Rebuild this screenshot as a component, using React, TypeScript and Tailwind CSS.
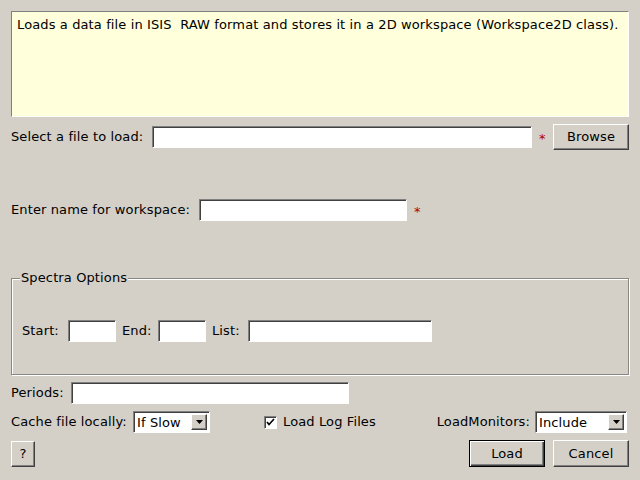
const font = { fontFamily: '"DejaVu Sans", Verdana, sans-serif' };

const sunken =
  "bg-white border border-t-[#808080] border-l-[#808080] border-r-white border-b-white shadow-[inset_1px_1px_0_#404040]";
const raised =
  "bg-[#d4d0c8] border border-t-white border-l-white border-r-[#404040] border-b-[#404040] shadow-[inset_-1px_-1px_0_#808080]";

function TextBox({ className = "" }: { className?: string }) {
  return <div className={`${sunken} h-[22px] ${className}`} />;
}

function Star() {
  return <span className="text-[#b00000] text-[13px] leading-none">*</span>;
}

function Combo({ value, className = "" }: { value: string; className?: string }) {
  return (
    <div className={`${sunken} h-[22px] flex items-center p-[2px] ${className}`}>
      <span className="flex-1 pl-[1px] text-[13px] leading-none">{value}</span>
      <div className={`${raised} w-[16px] h-full flex items-center justify-center`}>
        <svg width="7" height="4" viewBox="0 0 7 4">
          <path d="M0 0h7L3.5 4z" fill="#000" />
        </svg>
      </div>
    </div>
  );
}

export default function App() {
  return (
    <div
      className="w-[640px] h-[480px] bg-[#d4d0c8] text-black text-[13px] tracking-[0.12px] flex flex-col px-[11px] pt-[11px] overflow-hidden"
      style={font}
    >
      {/* description */}
      <div className="h-[106px] bg-[#ffffdc] border border-t-[#808080] border-l-[#808080] border-r-white border-b-white px-[5px] pt-[4px] leading-[18px]">
        Loads a data file in ISIS&nbsp; RAW format and stores it in a 2D workspace (Workspace2D class).
      </div>

      {/* file row */}
      <div className="mt-[7px] h-[26px] flex items-center">
        <span className="w-[141px]">Select a file to load:</span>
        <TextBox className="w-[380px]" />
        <span className="ml-[7px] mt-[3px]"><Star /></span>
        <button className={`${raised} ml-auto w-[76px] h-[26px] text-[13px]`}>Browse</button>
      </div>

      {/* workspace row */}
      <div className="mt-[49px] h-[22px] flex items-center">
        <span className="w-[188px]">Enter name for workspace:</span>
        <TextBox className="w-[208px]" />
        <span className="ml-[7px] mt-[3px]"><Star /></span>
      </div>

      {/* spectra options */}
      <div className="relative mt-[57px] h-[97px] border border-[#8a8780] shadow-[1px_1px_0_white,inset_1px_1px_0_white] pt-[41px] pl-[10px]">
        <span className="absolute -top-[9px] left-[8px] bg-[#d4d0c8] px-[1px] leading-[16px]">Spectra Options</span>
        <div className="flex items-center h-[22px]">
          <span className="w-[46px]">Start:</span>
          <TextBox className="w-[48px]" />
          <span className="ml-[6px] w-[36px]">End:</span>
          <TextBox className="w-[48px]" />
          <span className="ml-[6px] w-[36px]">List:</span>
          <TextBox className="w-[184px]" />
        </div>
      </div>

      {/* periods */}
      <div className="mt-[7px] h-[22px] flex items-center">
        <span className="w-[60px]">Periods:</span>
        <TextBox className="w-[278px]" />
      </div>

      {/* cache / log / monitors */}
      <div className="mt-[7px] h-[22px] flex items-center">
        <span className="w-[122px]">Cache file locally:</span>
        <Combo value="If Slow" className="w-[77px]" />
        <div className="ml-[54px] flex items-center">
          <div className={`${sunken} w-[13px] h-[13px] flex items-center justify-center`}>
            <svg width="9" height="9" viewBox="0 0 9 9">
              <path d="M1 4l2 2.5L8 1" stroke="#000" strokeWidth="1.6" fill="none" />
            </svg>
          </div>
          <span className="ml-[6px]">Load Log Files</span>
        </div>
        <span className="ml-auto mr-[5px]">LoadMonitors:</span>
        <Combo value="Include" className="w-[92px] mr-[2px]" />
      </div>

      {/* buttons */}
      <div className="mt-[7px] h-[27px] flex items-center">
        <button className={`${raised} w-[24px] h-[26px] text-[13px]`}>?</button>
        <button className="ml-auto w-[76px] h-[27px] bg-[#d4d0c8] border border-black shadow-[inset_1px_1px_0_white,inset_-1px_-1px_0_#404040,inset_-2px_-2px_0_#808080] text-[13px]">
          Load
        </button>
        <button className={`${raised} ml-[8px] w-[76px] h-[27px] text-[13px]`}>Cancel</button>
      </div>
    </div>
  );
}
